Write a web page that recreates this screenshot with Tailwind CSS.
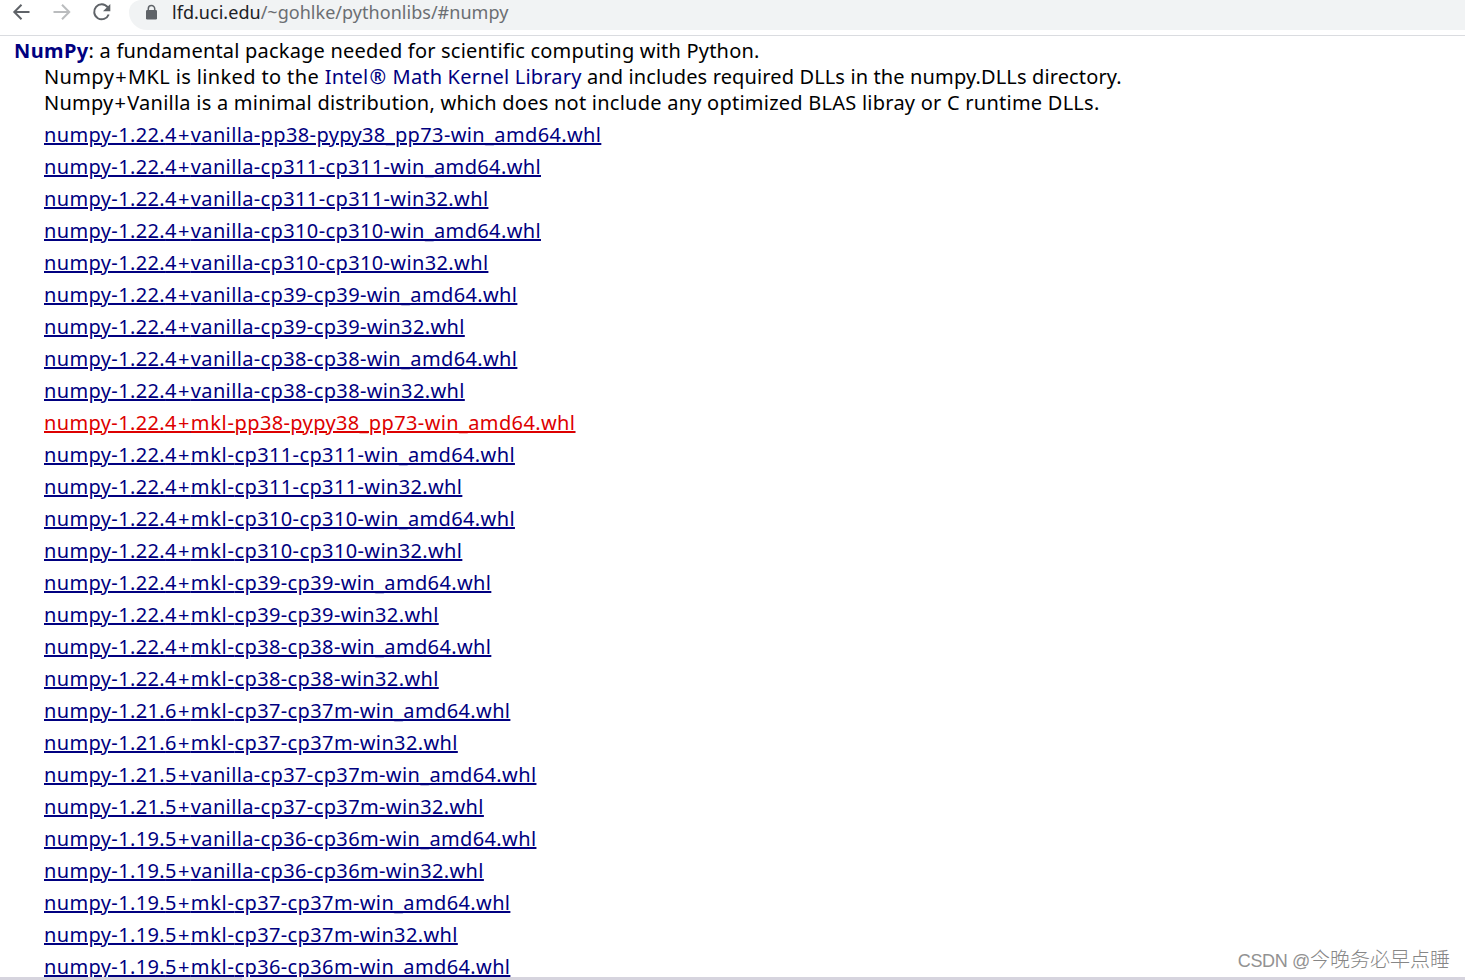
<!DOCTYPE html>
<html lang="en">
<head>
    <meta charset="UTF-8">
    <meta name="viewport" content="width=device-width, initial-scale=1.0">
    <title>Python Extension Packages for Windows</title>
    <script src="https://cdn.jsdelivr.net/npm/@tailwindcss/browser@4"></script>
</head>
<body class="bg-white h-[980px] overflow-hidden relative flex flex-col font-['Noto_Sans','Noto_Sans_CJK_SC',sans-serif] text-black">
    <!-- Browser toolbar -->
    <header class="h-9 shrink-0 flex items-start border-b border-[#dadce0]">
        <svg class="w-[129px] h-[30px] shrink-0" viewBox="0 0 129 30" fill="none" stroke-width="2">
            <path d="M29.500 12H15M21.500 4.800L14.300 12l7.200 7.200" stroke="#5f6368"/>
            <path d="M53.500 12H68M62 4.800L69.200 12L62 19.200" stroke="#babcbe"/>
            <path d="M107.600 7.200A7.500 7.500 0 1 0 108.700 14.500" stroke="#5f6368"/>
            <path d="M110.300 4v7.300H103z" fill="#5f6368"/>
        </svg>
        <div class="flex-1 h-[30px] bg-[#f1f3f4] rounded-bl-[18px] rounded-tl-[12px] flex items-start">
            <svg class="w-[43px] h-[30px] shrink-0" viewBox="0 0 43 30" fill="none">
                <rect x="17" y="10" width="11" height="9.500" rx="1.200" fill="#5f6368"/>
                <path d="M19.300 10.500V8.700a3.200 3.200 0 0 1 6.400 0v1.800" stroke="#5f6368" stroke-width="1.500"/>
            </svg>
            <span class="text-[18px] leading-[24px] tracking-[0.03px] text-[#6b6e72] whitespace-nowrap"><span class="text-[#202124]">lfd.uci.edu</span>/~gohlke/pythonlibs/#numpy</span>
        </div>
    </header>

    <!-- Package description -->
    <main class="pl-[14px] pt-[2px] text-[20px] whitespace-nowrap">
        <div class="leading-[26px] tracking-[0.24px]">
            <p class="tracking-[0.2px]"><b class="text-[#000080] tracking-[0.4px]">NumPy</b>: a fundamental package needed for scientific computing with Python.</p>
            <div class="pl-[30px]">
                <p><span class="tracking-[0.37px]">Numpy<span class="px-px">+</span>MKL is linked to the </span><a class="text-[#000080] tracking-[0.18px]">Intel<span class="px-px">®</span> Math Kernel Library</a><span class="tracking-[0.13px]"> and includes required DLLs in the numpy.DLLs directory.</span></p>
                <p>Numpy<span class="px-px">+</span>Vanilla is a minimal distribution, which does not include any optimized BLAS libray or C runtime DLLs.</p>
            </div>
        </div>

        <!-- Downloads -->
        <ul class="pl-[30px] pt-[3px] leading-[32px] tracking-[0.37px] text-[#000080] underline decoration-2 underline-offset-[1px]">
            <li>numpy-1.22.<span class="tracking-[1.4px]">4+</span>vanilla-pp38-pypy38_pp73-win_amd64.whl</li>
            <li>numpy-1.22.<span class="tracking-[1.4px]">4+</span>vanilla-cp311-cp311-win_amd64.whl</li>
            <li>numpy-1.22.<span class="tracking-[1.4px]">4+</span>vanilla-cp311-cp311-win32.whl</li>
            <li>numpy-1.22.<span class="tracking-[1.4px]">4+</span>vanilla-cp310-cp310-win_amd64.whl</li>
            <li>numpy-1.22.<span class="tracking-[1.4px]">4+</span>vanilla-cp310-cp310-win32.whl</li>
            <li>numpy-1.22.<span class="tracking-[1.4px]">4+</span>vanilla-cp39-cp39-win_amd64.whl</li>
            <li>numpy-1.22.<span class="tracking-[1.4px]">4+</span>vanilla-cp39-cp39-win32.whl</li>
            <li>numpy-1.22.<span class="tracking-[1.4px]">4+</span>vanilla-cp38-cp38-win_amd64.whl</li>
            <li>numpy-1.22.<span class="tracking-[1.4px]">4+</span>vanilla-cp38-cp38-win32.whl</li>
            <li class="text-[#dd0000] underline decoration-2 underline-offset-[1px]">numpy-1.22.<span class="tracking-[1.4px]">4+</span><span class="tracking-[0.7px]">mkl-</span>pp38-pypy38_pp73-win_amd64.whl</li>
            <li>numpy-1.22.<span class="tracking-[1.4px]">4+</span><span class="tracking-[0.7px]">mkl-</span>cp311-cp311-win_amd64.whl</li>
            <li>numpy-1.22.<span class="tracking-[1.4px]">4+</span><span class="tracking-[0.7px]">mkl-</span>cp311-cp311-win32.whl</li>
            <li>numpy-1.22.<span class="tracking-[1.4px]">4+</span><span class="tracking-[0.7px]">mkl-</span>cp310-cp310-win_amd64.whl</li>
            <li>numpy-1.22.<span class="tracking-[1.4px]">4+</span><span class="tracking-[0.7px]">mkl-</span>cp310-cp310-win32.whl</li>
            <li>numpy-1.22.<span class="tracking-[1.4px]">4+</span><span class="tracking-[0.7px]">mkl-</span>cp39-cp39-win_amd64.whl</li>
            <li>numpy-1.22.<span class="tracking-[1.4px]">4+</span><span class="tracking-[0.7px]">mkl-</span>cp39-cp39-win32.whl</li>
            <li>numpy-1.22.<span class="tracking-[1.4px]">4+</span><span class="tracking-[0.7px]">mkl-</span>cp38-cp38-win_amd64.whl</li>
            <li>numpy-1.22.<span class="tracking-[1.4px]">4+</span><span class="tracking-[0.7px]">mkl-</span>cp38-cp38-win32.whl</li>
            <li>numpy-1.21.<span class="tracking-[1.4px]">6+</span><span class="tracking-[0.7px]">mkl-</span>cp37-cp37m-win_amd64.whl</li>
            <li>numpy-1.21.<span class="tracking-[1.4px]">6+</span><span class="tracking-[0.7px]">mkl-</span>cp37-cp37m-win32.whl</li>
            <li>numpy-1.21.<span class="tracking-[1.4px]">5+</span>vanilla-cp37-cp37m-win_amd64.whl</li>
            <li>numpy-1.21.<span class="tracking-[1.4px]">5+</span>vanilla-cp37-cp37m-win32.whl</li>
            <li>numpy-1.19.<span class="tracking-[1.4px]">5+</span>vanilla-cp36-cp36m-win_amd64.whl</li>
            <li>numpy-1.19.<span class="tracking-[1.4px]">5+</span>vanilla-cp36-cp36m-win32.whl</li>
            <li>numpy-1.19.<span class="tracking-[1.4px]">5+</span><span class="tracking-[0.7px]">mkl-</span>cp37-cp37m-win_amd64.whl</li>
            <li>numpy-1.19.<span class="tracking-[1.4px]">5+</span><span class="tracking-[0.7px]">mkl-</span>cp37-cp37m-win32.whl</li>
            <li>numpy-1.19.<span class="tracking-[1.4px]">5+</span><span class="tracking-[0.7px]">mkl-</span>cp36-cp36m-win_amd64.whl</li>
        </ul>
    </main>

    <!-- Status bar edge -->
    <div class="absolute left-0 bottom-0 w-full h-[3px] flex bg-[#d6d4de]">
        <div class="w-[242px]"></div>
        <div class="w-[61px] bg-[#eeedf2]"></div>
    </div>
    <!-- Watermark -->
    <div class="absolute right-[15px] bottom-[5px] text-[20px] leading-[28px] font-light text-[#868686] font-['Liberation_Sans','Noto_Sans_CJK_SC',sans-serif] whitespace-nowrap"><span class="text-[18px] tracking-[-0.35px] text-[#929292]">CSDN @</span>今晚务必早点睡</div>
</body>
</html>
